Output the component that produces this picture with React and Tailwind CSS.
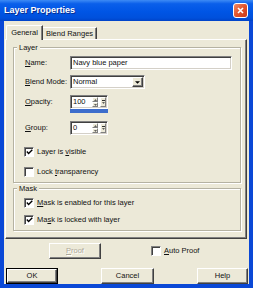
const sunken =
  "bg-white border border-t-[#808080] border-l-[#808080] border-r-white border-b-white shadow-[inset_1px_1px_0_#404040,inset_-1px_-1px_0_#D4D0C8]";
const raised =
  "bg-[#ECE9D8] border border-t-white border-l-white border-r-[#404040] border-b-[#404040] shadow-[inset_-1px_-1px_0_#808080]";
const raisedLight =
  "bg-[#ECE9D8] border border-t-white border-l-white border-r-[#808080] border-b-[#808080]";

function U({ children }) {
  return <span className="underline underline-offset-[1px] decoration-[0.5px]">{children}</span>;
}

function Tri({ up, w = 5, color = "black" }) {
  return (
    <svg width={w} height={Math.ceil(w / 2)} viewBox="0 0 6 3">
      <path d={up ? "M0 3 L3 0 L6 3 Z" : "M0 0 L6 0 L3 3 Z"} fill={color} />
    </svg>
  );
}

function Check({ checked }) {
  return (
    <span className="w-[10px] h-[10px] shrink-0 flex items-center justify-center bg-white border border-t-[#808080] border-l-[#808080] border-r-white border-b-white shadow-[inset_1px_1px_0_#404040]">
      {checked && (
        <svg width="7" height="6" viewBox="0 0 7 6">
          <path d="M0.8 2.6 L2.6 4.5 L6.3 0.8" stroke="black" strokeWidth="1.4" fill="none" />
        </svg>
      )}
    </span>
  );
}

function CheckRow({ checked, children, className = "" }) {
  return (
    <div className={`flex items-center gap-[3px] h-[10px] ${className}`}>
      <Check checked={checked} />
      <span className="leading-none">{children}</span>
    </div>
  );
}

function Spinner({ value }) {
  return (
    <div className={`${sunken} w-[38px] h-[14px] flex items-center pl-[2px] pr-[1px]`}>
      <span className="flex-1 leading-none">{value}</span>
      <div className="flex flex-col w-[6px] h-[10px]">
        <div className={`${raisedLight} flex-1 flex items-center justify-center`}>
          <Tri up w={3} color="#333" />
        </div>
        <div className={`${raisedLight} flex-1 flex items-center justify-center`}>
          <Tri w={3} color="#333" />
        </div>
      </div>
      <div className={`${raisedLight} w-[6px] h-[10px] ml-[2px] flex flex-col items-center justify-center gap-[1px]`}>
        <span className="w-[3px] h-px bg-[#333]" />
        <Tri w={3} color="#333" />
      </div>
    </div>
  );
}

function Group({ label, className = "", children }) {
  return (
    <div className={`relative border border-[#B5B2A2] shadow-[inset_1px_1px_0_white,1px_1px_0_white] ${className}`}>
      <span className="absolute -top-[5px] left-[3px] px-[2px] bg-[#ECE9D8] leading-[9px]">{label}</span>
      {children}
    </div>
  );
}

function Button({ children, disabled, isDefault, className = "" }) {
  const inner = (
    <div className={`${raised} h-full flex items-center justify-center`}>
      <span className={disabled ? "text-[#ACA899] [text-shadow:1px_1px_0_white]" : ""}>{children}</span>
    </div>
  );
  if (isDefault) {
    return <div className={`border border-black h-[16px] ${className}`}>{inner}</div>;
  }
  return <div className={`h-[16px] ${className}`}>{inner}</div>;
}

export default function App() {
  return (
    <div className="w-[253px] h-[288px] flex flex-col bg-[#0A48D6] font-['Liberation_Sans',Arial,sans-serif] text-[7.5px] text-[#111] select-none">
      {/* Title bar */}
      <div className="h-[21px] shrink-0 flex items-center justify-between pl-[4px] pr-[5px] bg-[linear-gradient(to_bottom,#3D8BF5_0%,#0A5FEA_18%,#0055E5_55%,#0050DC_85%,#0043C8_100%)]">
        <span className="text-white font-bold text-[9px] leading-none [text-shadow:1px_1px_0_#0A2C8F]">Layer Properties</span>
        <div className="w-[15px] h-[15px] rounded-[3px] border border-white bg-[linear-gradient(135deg,#F08A66_0%,#E2542C_50%,#C7391A_100%)] flex items-center justify-center">
          <svg width="7" height="7" viewBox="0 0 7 7">
            <path d="M1 1 L6 6 M6 1 L1 6" stroke="white" strokeWidth="1.6" />
          </svg>
        </div>
      </div>

      {/* Body */}
      <div className="flex-1 mx-[4px] mb-[4px] bg-[#ECE9D8] flex flex-col">
        {/* Tabs */}
        <div className="mt-[4px] h-[14px] flex items-start pl-[2px]">
          <div className="relative z-10 w-[37px] h-[15px] bg-[#ECE9D8] border-t border-l border-r border-t-white border-l-white border-r-[#404040] shadow-[inset_-1px_0_0_#808080] rounded-tl-[2px] flex items-center justify-center leading-none">
            General
          </div>
          <div className="mt-[2px] w-[54px] h-[12px] border-t border-r border-t-white border-r-[#404040] shadow-[inset_-1px_0_0_#808080] flex items-center justify-center leading-none">
            Blend Ranges
          </div>
        </div>

        {/* Panel */}
        <div className="ml-[1px] w-[242px] border border-t-white border-l-white border-r-[#404040] border-b-[#404040] shadow-[inset_-1px_-1px_0_#808080] pt-[7px] pl-[7px] pb-[7px]">
          <Group label="Layer" className="w-[228px] pl-[10px] pb-[5px]">
            <div className="mt-[8px] h-[14px] flex items-center">
              <span className="w-[46px] shrink-0 pl-[1px] leading-none"><U>N</U>ame:</span>
              <div className={`${sunken} w-[162px] h-[14px] flex items-center pl-[2px] leading-none`}>Navy blue paper</div>
            </div>
            <div className="mt-[5px] h-[14px] flex items-center">
              <span className="w-[46px] shrink-0 pl-[1px] leading-none"><U>B</U>lend Mode:</span>
              <div className={`${sunken} w-[75px] h-[14px] flex items-center pl-[2px] pr-[1px]`}>
                <span className="flex-1 leading-none">Normal</span>
                <div className={`${raised} w-[11px] h-[10px] flex items-center justify-center`}>
                  <Tri w={5} />
                </div>
              </div>
            </div>
            <div className="mt-[6px] flex">
              <span className="w-[46px] shrink-0 pl-[1px] h-[14px] flex items-center leading-none"><U>O</U>pacity:</span>
              <div className="flex flex-col">
                <Spinner value="100" />
                <div className="w-[38px] h-[4px] bg-[#3D6DCC]" />
              </div>
            </div>
            <div className="mt-[8px] h-[14px] flex items-center">
              <span className="w-[46px] shrink-0 pl-[1px] leading-none"><U>G</U>roup:</span>
              <Spinner value="0" />
            </div>
            <CheckRow checked className="mt-[12px]">
              Layer is <U>v</U>isible
            </CheckRow>
            <CheckRow className="mt-[10px]">
              Lock <U>t</U>ransparency
            </CheckRow>
          </Group>

          <Group label="Mask" className="mt-[5px] w-[228px] pl-[10px] pb-[5px]">
            <CheckRow checked className="mt-[9px]">
              <U>M</U>ask is enabled for this layer
            </CheckRow>
            <CheckRow checked className="mt-[7px]">
              Ma<U>s</U>k is locked with layer
            </CheckRow>
          </Group>
        </div>

        {/* Proof row */}
        <div className="mt-[4px] h-[16px] flex items-center">
          <Button disabled className="ml-[45px] w-[52px]">
            <U>P</U>roof
          </Button>
          <div className="ml-[50px] flex items-center gap-[3px]">
            <Check />
            <span className="leading-none"><U>A</U>uto Proof</span>
          </div>
        </div>

        {/* Buttons */}
        <div className="mt-[9px] flex justify-between pl-[2px] pr-[1px]">
          <Button isDefault className="w-[52px]">OK</Button>
          <Button className="w-[53px]">Cancel</Button>
          <Button className="w-[51px]">Help</Button>
        </div>
      </div>
    </div>
  );
}
